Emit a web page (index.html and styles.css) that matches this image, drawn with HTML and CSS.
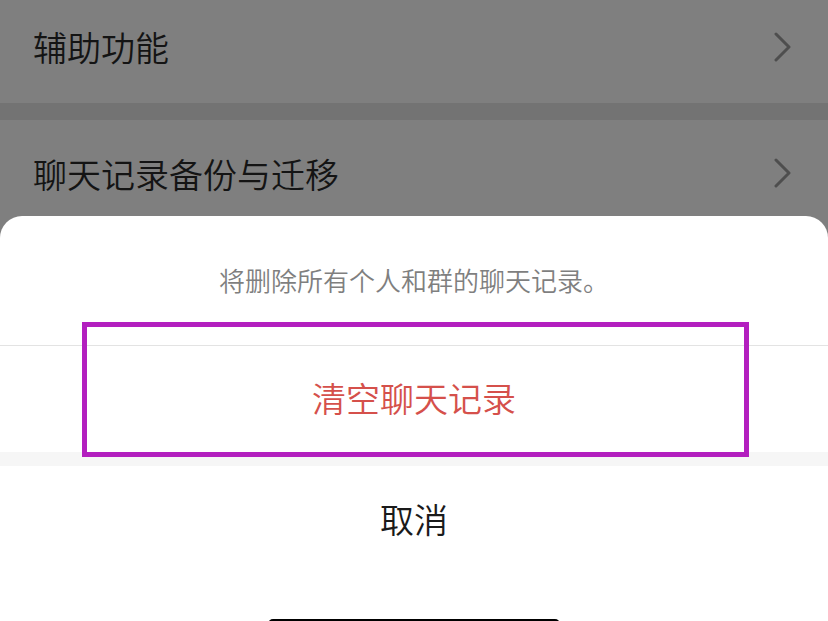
FILE: index.html
```html
<!DOCTYPE html>
<html lang="zh-CN">
<head>
<meta charset="utf-8">
<title>清空聊天记录</title>
<link rel="stylesheet" href="styles.css">
</head>
<body>
<div class="page">
  <div class="list">
    <div class="row row-first">
      <span class="label">辅助功能</span>
      <svg class="chev" width="18" height="30" viewBox="0 0 18 30"><polyline points="2,2 15,15 2,28" fill="none" stroke="#4e4e4e" stroke-width="3" stroke-linecap="round" stroke-linejoin="round"/></svg>
    </div>
    <div class="gap"></div>
    <div class="row row-second">
      <span class="label">聊天记录备份与迁移</span>
      <svg class="chev" width="18" height="30" viewBox="0 0 18 30"><polyline points="2,2 15,15 2,28" fill="none" stroke="#4e4e4e" stroke-width="3" stroke-linecap="round" stroke-linejoin="round"/></svg>
    </div>
  </div>

  <div class="sheet">
    <div class="msg">将删除所有个人和群的聊天记录。</div>
    <div class="action danger">清空聊天记录</div>
    <div class="band"></div>
    <div class="action cancel">取消</div>
    <div class="indicator-wrap"><div class="indicator"></div></div>
  </div>

  <div class="highlight"></div>
</div>
</body>
</html>
```
FILE: styles.css
```css
* { box-sizing: border-box; }
html, body {
  margin: 0;
  padding: 0;
  background: #7f7f7f;
}
body {
  font-family: "Noto Sans CJK SC", "Noto Sans", sans-serif;
  font-weight: 350;
}
.page {
  position: relative;
  width: 828px;
  height: 621px;
  overflow: hidden;
  background: #7f7f7f;
}
.list {
  display: flex;
  flex-direction: column;
}
.row {
  display: flex;
  align-items: center;
  justify-content: space-between;
  height: 112px;
  padding: 0 36px 0 33px;
  background: #7f7f7f;
}
.row-first {
  height: 103px;
  padding-bottom: 9px;
}
.row-second {
  align-items: flex-start;
  padding-top: 32px;
}
.label {
  font-size: 34px;
  color: #141414;
  line-height: 44px;
}
.chev {
  display: block;
}
.row-second .chev { margin-top: 6px; }
.gap {
  height: 17px;
  background: #737373;
}
.sheet {
  position: absolute;
  left: 0;
  right: 0;
  top: 216px;
  bottom: -40px;
  background: #ffffff;
  border-radius: 22px 22px 0 0;
  display: flex;
  flex-direction: column;
}
.msg {
  height: 130px;
  display: flex;
  align-items: center;
  justify-content: center;
  font-size: 26px;
  color: #7f7f7f;
  border-bottom: 1px solid #e3e3e3;
  padding-bottom: 2px;
}
.action {
  display: flex;
  align-items: center;
  justify-content: center;
  font-size: 34px;
}
.danger {
  height: 106px;
  color: #d5504b;
  padding-bottom: 3px;
}
.band {
  height: 14px;
  background: #f6f6f6;
}
.cancel {
  height: 104px;
  color: #1a1a1a;
}
.indicator-wrap {
  display: flex;
  justify-content: center;
  padding-top: 49px;
}
.indicator {
  width: 292px;
  height: 10px;
  border-radius: 5px;
  background: #000;
}
.highlight {
  position: absolute;
  left: 82px;
  top: 322px;
  width: 667px;
  height: 135px;
  border: 5px solid #b31fbf;
}
```
